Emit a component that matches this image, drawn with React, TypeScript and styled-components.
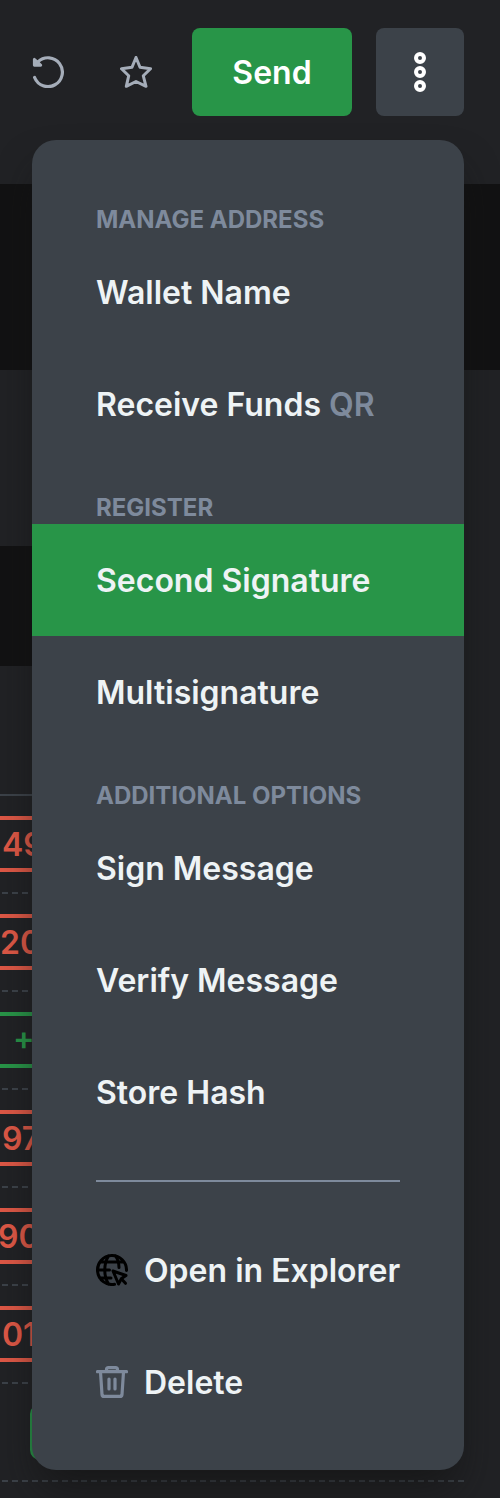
import React from 'react';
import styled, { createGlobalStyle } from 'styled-components';

const Global = createGlobalStyle`
  * { box-sizing: border-box; }
  body { margin: 0; background: #212225; font-family: Inter, sans-serif; }
`;

const Page = styled.div`
  position: relative;
  width: 500px;
  height: 1498px;
  overflow: hidden;
  background: #212225;
`;

const Toolbar = styled.header`
  display: flex;
  align-items: center;
  height: 184px;
  padding: 28px 36px 68px 16px;
`;

const IconButton = styled.button`
  display: flex;
  align-items: center;
  justify-content: center;
  width: 64px;
  height: 64px;
  margin-right: 24px;
  padding: 0;
  border: 0;
  background: none;
  color: #a5adb9;
`;

const SendButton = styled.button`
  width: 160px;
  height: 88px;
  margin-right: 24px;
  padding: 2px 0 0;
  border: 0;
  border-radius: 8px;
  background: #289548;
  color: #fff;
  font: 600 32px/40px Inter, sans-serif;
`;

const MoreButton = styled.button`
  display: flex;
  align-items: center;
  justify-content: center;
  width: 88px;
  height: 88px;
  padding: 0;
  border: 0;
  border-radius: 8px;
  background: #3c4249;
  color: #fff;
`;

const Band = styled.section<{ $height: number; $width: string }>`
  width: ${(p) => p.$width};
  height: ${(p) => p.$height}px;
  background: #121213;
`;

const Gap = styled.div<{ $height: number }>`
  height: ${(p) => p.$height}px;
`;

const Table = styled.section`
  width: 464px;
  border-top: 2px solid #3c4249;
`;

const Row = styled.div`
  display: flex;
  align-items: center;
  height: 98px;
  padding-bottom: 2px;
  background: repeating-linear-gradient(to left, #3c4249 0 6px, transparent 6px 9.91px) left bottom / 100% 2px no-repeat;
`;

const Amount = styled.div<{ $tone: string; $shift: number; $tag?: boolean }>`
  flex: none;
  width: 300px;
  height: 56px;
  margin-left: ${(p) => (p.$tag ? 30 : -100)}px;
  padding: 1px 0 0 ${(p) => p.$shift}px;
  border: 4px solid ${(p) => p.$tone};
  border-radius: 10px;
  color: ${(p) => p.$tone};
  font: 600 32px/48px Inter, sans-serif;
  white-space: nowrap;
`;

const Menu = styled.nav`
  position: absolute;
  top: 140px;
  left: 32px;
  width: 432px;
  padding: 32px 0;
  border-radius: 24px;
  background: #3c4249;
  box-shadow: 0 24px 40px -8px rgba(18, 18, 19, 0.7);
`;

const Heading = styled.h2`
  height: 64px;
  margin: 0;
  padding: 33px 64px 0;
  color: #7e8a9c;
  font-weight: 700;
  font-size: 24px;
  line-height: 30px;
  white-space: nowrap;
`;

const Item = styled.a<{ $active?: boolean }>`
  display: flex;
  align-items: center;
  height: 112px;
  padding: 0 0 0 64px;
  background: ${(p) => (p.$active ? '#289548' : 'transparent')};
  color: #eef3f5;
  font-weight: 600;
  font-size: 32px;
  line-height: 40px;
  white-space: pre;

  svg { flex: none; margin-right: 16px; }
`;

const Label = styled.span`
  padding-top: 2px;
`;

const Hint = styled.span`
  color: #7e8a9c;
`;

const Divider = styled.hr`
  height: 2px;
  margin: 32px 64px;
  border: 0;
  background: #7e8a9c;
`;

const RED = '#de5846';
const GREEN = '#289548';

const rows = [
  { text: '- 49.10', tone: RED, shift: 75 },
  { text: '- 20.00', tone: RED, shift: 73 },
  { text: '+ 12.00', tone: GREEN, shift: 109 },
  { text: '97.40', tone: RED, shift: 98 },
  { text: '90.15', tone: RED, shift: 94 },
  { text: '01.02', tone: RED, shift: 98 },
];

const RefreshIcon = () => (
  <svg width="32" height="32" viewBox="0 0 32 32" fill="none" stroke="currentColor" strokeWidth="3.2" strokeLinecap="round" strokeLinejoin="round">
    <path d="M2.600 21.500A14.400 14.400 0 1 0 6 5.800L3.500 8.300" />
    <path d="M2.300 3.300V9.300H8.800L6 6.500Z" fill="currentColor" strokeWidth="2.800" />
  </svg>
);

const StarIcon = () => (
  <svg width="32" height="32" viewBox="0 0 32 32" fill="none" stroke="currentColor" strokeWidth="3" strokeLinejoin="round">
    <path d="M16 1.500L20 11.300L30.500 12.700L23.300 19.800L26 30.300L16 25.500L6.300 30.300L8.700 19.800L1.500 12.700L12 11.300Z" />
  </svg>
);

const DotsIcon = () => (
  <svg width="12" height="40" viewBox="0 0 12 40" fill="none" stroke="currentColor" strokeWidth="4">
    <circle cx="6" cy="6" r="4" />
    <circle cx="6" cy="20" r="4" />
    <circle cx="6" cy="34" r="4" />
  </svg>
);

const ExplorerIcon = () => (
  <svg width="32" height="32" viewBox="0 0 32 32" fill="none" stroke="#000" strokeWidth="3" strokeLinecap="round" strokeLinejoin="round">
    <path d="M30.500 16.500A14.500 14.500 0 1 0 18.500 30.300M4 8H28M1.500 16H13.500M4 24H15" />
    <path d="M12.500 2C7.500 10 7.500 22 12.500 30M19.500 2C22 5.500 23 10 23 13.500" />
    <path d="M17 17L30 21.500L25.500 24.500L22.500 30Z" />
    <path d="M25.500 25L29.500 29.300" />
  </svg>
);

const TrashIcon = () => (
  <svg width="32" height="32" viewBox="0 0 32 32" fill="none" stroke="#7e8a9c" strokeWidth="3.2" strokeLinecap="round" strokeLinejoin="round">
    <path d="M1.500 5.700H30.500M10.500 5V3.500Q10.500 1.600 12.500 1.600H19.500Q21.500 1.600 21.500 3.500V5" />
    <path d="M4.500 6L6 28.500Q6.200 30.400 8 30.400H24Q25.800 30.400 26 28.500L27.500 6M13 13V23M19 13V23" />
  </svg>
);

export default function App() {
  return (
    <Page>
      <Global />
      <Toolbar>
        <IconButton aria-label="Refresh"><RefreshIcon /></IconButton>
        <IconButton aria-label="Favourite"><StarIcon /></IconButton>
        <SendButton>Send</SendButton>
        <MoreButton aria-label="More"><DotsIcon /></MoreButton>
      </Toolbar>
      <Band $height={186} $width="100%" />
      <Gap $height={176} />
      <Band $height={120} $width="400px" />
      <Gap $height={128} />
      <Table>
        {rows.map((r) => (
          <Row key={r.text}><Amount $tone={r.tone} $shift={r.shift}>{r.text}</Amount></Row>
        ))}
        <Row><Amount $tone={GREEN} $shift={0} $tag /></Row>
      </Table>
      <Menu>
        <Heading>MANAGE ADDRESS</Heading>
        <Item><Label>Wallet Name</Label></Item>
        <Item><Label>Receive Funds <Hint>QR</Hint></Label></Item>
        <Heading>REGISTER</Heading>
        <Item $active><Label>Second Signature</Label></Item>
        <Item><Label>Multisignature</Label></Item>
        <Heading>ADDITIONAL OPTIONS</Heading>
        <Item><Label>Sign Message</Label></Item>
        <Item><Label>Verify Message</Label></Item>
        <Item><Label>Store Hash</Label></Item>
        <Divider />
        <Item><ExplorerIcon /><Label>Open in Explorer</Label></Item>
        <Item><TrashIcon /><Label>Delete</Label></Item>
      </Menu>
    </Page>
  );
}
